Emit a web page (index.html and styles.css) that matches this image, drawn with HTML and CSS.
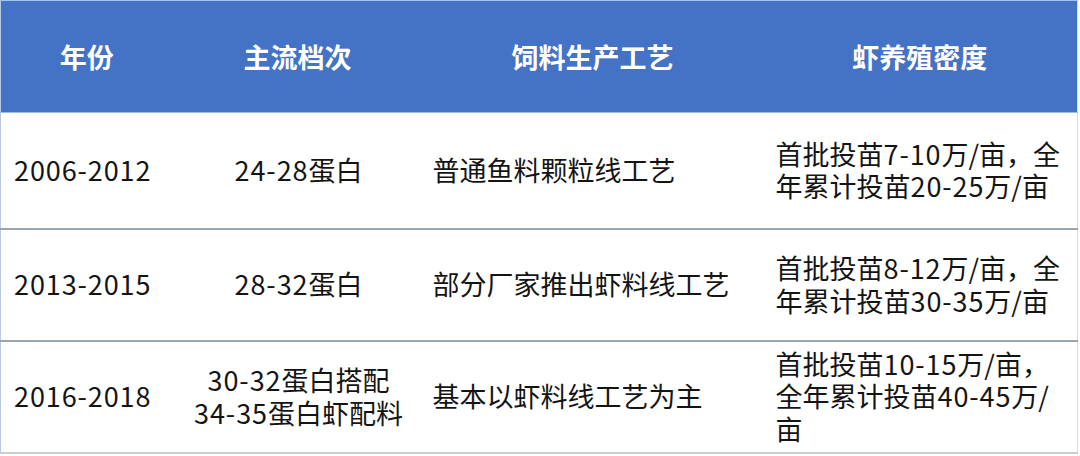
FILE: index.html
```html
<!DOCTYPE html>
<html lang="zh-CN">
<head>
<meta charset="utf-8">
<title>虾料发展</title>
<link rel="stylesheet" href="styles.css">
</head>
<body>
<table class="tbl">
  <colgroup>
    <col class="c1"><col class="c2"><col class="c3"><col class="c4">
  </colgroup>
  <thead>
    <tr class="head">
      <th>年份</th>
      <th>主流档次</th>
      <th>饲料生产工艺</th>
      <th>虾养殖密度</th>
    </tr>
  </thead>
  <tbody>
    <tr class="r1">
      <td class="year"><span class="num">2006-2012</span></td>
      <td class="grade"><span class="num">24-28</span>蛋白</td>
      <td class="proc">普通鱼料颗粒线工艺</td>
      <td class="dens">首批投苗<span class="num">7-10</span>万/亩，全<br>年累计投苗<span class="num">20-25</span>万/亩</td>
    </tr>
    <tr class="r2">
      <td class="year"><span class="num">2013-2015</span></td>
      <td class="grade"><span class="num">28-32</span>蛋白</td>
      <td class="proc">部分厂家推出虾料线工艺</td>
      <td class="dens">首批投苗<span class="num">8-12</span>万/亩，全<br>年累计投苗<span class="num">30-35</span>万/亩</td>
    </tr>
    <tr class="r3">
      <td class="year"><span class="num">2016-2018</span></td>
      <td class="grade"><span class="num">30-32</span>蛋白搭配<br><span class="num">34-35</span>蛋白虾配料</td>
      <td class="proc">基本以虾料线工艺为主</td>
      <td class="dens">首批投苗<span class="num">10-15</span>万/亩，<br>全年累计投苗<span class="num">40-45</span>万/<br>亩</td>
    </tr>
  </tbody>
</table>
</body>
</html>
```

FILE: styles.css
```css
html, body {
  margin: 0;
  padding: 0;
  background: #ffffff;
}
.tbl {
  width: 1077px;
  border-collapse: collapse;
  table-layout: fixed;
  font-family: "Noto Sans CJK SC", "Noto Sans", sans-serif;
  font-size: 27px;
  line-height: 32.5px;
  color: #141414;
  border-left: 1px solid #b8c9e3;
  border-right: 1px solid #d6dde6;
}
.c1 { width: 172px; }
.c2 { width: 250px; }
.c3 { width: 340px; }
.c4 { width: 315px; }
.head {
  height: 112px;
  background: #4472c4;
  border-top: 1px solid #a9c4e8;
}
.head th {
  color: #ffffff;
  font-weight: 700;
  text-align: center;
  vertical-align: middle;
  padding: 0;
  padding-top: 2px;
  border-bottom: 1px solid #9dbbe3;
}
tbody td {
  vertical-align: middle;
  padding: 0;
  border-bottom: 2px solid #9ba5ae;
}
.num { letter-spacing: 0.9px; }
.r1 { height: 116px; }
.r2 { height: 112px; }
.r3 { height: 112px; }
.year { padding-left: 13px; text-align: left; }
.grade { text-align: center; padding-left: 2px; }
.proc { padding-left: 10px; text-align: left; }
.dens { padding-left: 13px; text-align: left; white-space: nowrap; }
.r3 td { border-bottom: 2px solid #c9ced4; }
```
